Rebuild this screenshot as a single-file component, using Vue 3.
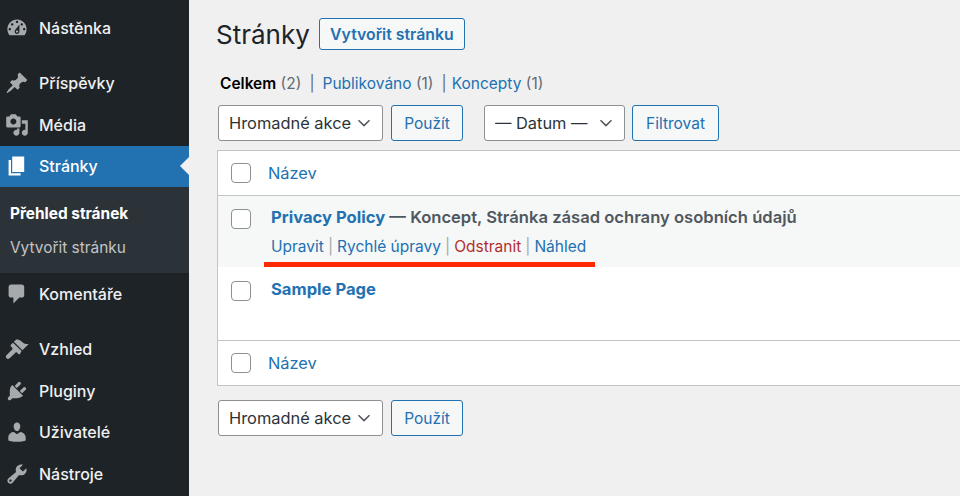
<template>
  <div class="page">
    <aside class="sidebar">
      <nav class="menu">
        <template v-for="item in menuItems" :key="item.label">
          <a class="menuItem" :class="{ current: item.current, spaced: item.spaced }">
            <svg class="menuIcon" viewBox="0 0 20 20"><path :d="item.icon" /></svg>
            <span>{{ item.label }}</span>
          </a>
          <div v-if="item.current" class="submenu">
            <a class="subItem active">Přehled stránek</a>
            <a class="subItem">Vytvořit stránku</a>
          </div>
        </template>
      </nav>
    </aside>

    <main class="content">
      <div class="titleRow">
        <h1>Stránky</h1>
        <button class="btn addNew">Vytvořit stránku</button>
      </div>

      <ul class="subsub">
        <li><b>Celkem</b> <span class="count">(2)</span></li>
        <li class="sep">|</li>
        <li><a>Publikováno</a> <span class="count">(1)</span></li>
        <li class="sep">|</li>
        <li class="last"><a>Koncepty</a> <span class="count">(1)</span></li>
      </ul>

      <div class="tablenav">
        <div class="selectBox bulk">
          <select><option>Hromadné akce</option></select>
          <svg viewBox="0 0 14 8"><path d="M1.5 1.2 7 6.6l5.5-5.4" /></svg>
        </div>
        <button class="btn apply">Použít</button>
        <div class="selectBox date">
          <select><option>— Datum —</option></select>
          <svg viewBox="0 0 14 8"><path d="M1.5 1.2 7 6.6l5.5-5.4" /></svg>
        </div>
        <button class="btn filter">Filtrovat</button>
      </div>

      <div class="table">
        <div class="row head">
          <input type="checkbox" />
          <a class="colName">Název</a>
        </div>
        <div class="row page-row hovered">
          <input type="checkbox" />
          <div class="cell">
            <div class="titleLine"><a>Privacy Policy</a> — Koncept, Stránka zásad ochrany osobních údajů</div>
            <div class="actions">
              <a>Upravit</a><i>|</i><a>Rychlé úpravy</a><i>|</i><a class="danger">Odstranit</a><i>|</i><a>Náhled</a>
            </div>
          </div>
          <div class="redLine"></div>
        </div>
        <div class="row page-row">
          <input type="checkbox" />
          <div class="cell">
            <div class="titleLine"><a>Sample Page</a></div>
          </div>
        </div>
        <div class="row foot">
          <input type="checkbox" />
          <a class="colName">Název</a>
        </div>
      </div>

      <div class="tablenav bottom">
        <div class="selectBox bulk">
          <select><option>Hromadné akce</option></select>
          <svg viewBox="0 0 14 8"><path d="M1.5 1.2 7 6.6l5.5-5.4" /></svg>
        </div>
        <button class="btn apply">Použít</button>
      </div>
    </main>
  </div>
</template>

<script setup>
const menuItems = [
  {
    label: 'Nástěnka',
    icon: 'M3.76 16h12.48c1.1-1.37 1.76-3.11 1.76-5 0-4.42-3.58-8-8-8s-8 3.58-8 8c0 1.89.66 3.63 1.76 5zM10 4c.55 0 1 .45 1 1s-.45 1-1 1-1-.45-1-1 .45-1 1-1zM6 6c.55 0 1 .45 1 1s-.45 1-1 1-1-.45-1-1 .45-1 1-1zm8 0c.55 0 1 .45 1 1s-.45 1-1 1-1-.45-1-1 .45-1 1-1zm-5.37 5.55L12 7v6c0 1.1-.9 2-2 2s-2-.9-2-2c0-.57.24-1.08.63-1.45zM4 10c.55 0 1 .45 1 1s-.45 1-1 1-1-.45-1-1 .45-1 1-1zm12 0c.55 0 1 .45 1 1s-.45 1-1 1-1-.45-1-1 .45-1 1-1zm-5 3c0-.55-.45-1-1-1s-1 .45-1 1 .45 1 1 1 1-.45 1-1z'
  },
  {
    label: 'Příspěvky',
    spaced: true,
    icon: 'M10.44 3.02l1.82-1.82 6.36 6.35-1.83 1.82c-1.05-.68-2.48-.57-3.41.36l-.75.75c-.92.93-1.04 2.35-.35 3.41l-1.83 1.82-2.41-2.41-2.8 2.79c-.42.42-3.38 2.71-3.8 2.29s1.86-3.39 2.28-3.81l2.79-2.79L4.1 9.36l1.83-1.82c1.05.69 2.48.57 3.4-.36l.75-.75c.93-.92 1.05-2.35.36-3.41z'
  },
  {
    label: 'Média',
    icon: 'M13 11V4c0-.55-.45-1-1-1h-1.67L9 1H5L3.67 3H2c-.55 0-1 .45-1 1v7c0 .55.45 1 1 1h10c.55 0 1-.45 1-1zM7 4.5c1.38 0 2.5 1.12 2.5 2.5S8.38 9.5 7 9.5 4.5 8.38 4.5 7 5.62 4.5 7 4.5zM14 6h5v10.5c0 1.38-1.12 2.5-2.5 2.5S14 17.88 14 16.5s1.12-2.5 2.5-2.5c.17 0 .34.02.5.05V9h-3V6zm-4 8.05V13h2v3.5c0 1.38-1.12 2.5-2.5 2.5S7 17.88 7 16.5 8.12 14 9.5 14c.17 0 .34.02.5.05z'
  },
  {
    label: 'Stránky',
    current: true,
    icon: 'M6 15V2h10v13H6zm-1 1h8v2H3V5h2v11z'
  },
  {
    label: 'Komentáře',
    icon: 'M5 2h9c1.1 0 2 .9 2 2v7c0 1.1-.9 2-2 2h-2l-5 5v-5H5c-1.1 0-2-.9-2-2V4c0-1.1.9-2 2-2z'
  },
  {
    label: 'Vzhled',
    spaced: true,
    icon: 'M14.48 11.06L7.41 3.99l1.5-1.5c.5-.56 2.3-.47 3.51.32 1.21.8 1.43 1.28 2.91 2.1 1.18.64 2.45 1.26 4.45.85zM13.77 11.77 6.7 4.7 4.93 6.47c-.39.39-.39 1.02 0 1.41l1.06 1.06c.39.39.39 1.03 0 1.42L1.4 14.9c-.9.9-.9 2-.1 2.8s1.9.8 2.8-.1l4.54-4.54c.39-.39 1.02-.39 1.41 0l1.07 1.06c.39.39 1.02.39 1.41 0z'
  },
  {
    label: 'Pluginy',
    icon: 'M13.11 4.36L9.87 7.6 8 5.73l3.24-3.24c.35-.34 1.05-.2 1.56.32.52.51.66 1.21.31 1.55zm-8 1.77l.91-1.12 9.01 9.01-1.19.84c-.71.71-2.63 1.16-3.82 1.16H6.14L4.9 17.26c-.59.59-1.54.59-2.12 0-.59-.58-.59-1.53 0-2.12l1.24-1.24v-3.88c0-1.13.4-3.19 1.09-3.89zm7.26 3.97l3.24-3.24c.34-.35 1.04-.21 1.55.31.52.51.66 1.21.31 1.55l-3.24 3.25z'
  },
  {
    label: 'Uživatelé',
    icon: 'M10 9.25c-2.27 0-2.73-3.44-2.73-3.44C7 4.02 7.82 2 9.97 2c2.16 0 2.98 2.02 2.71 3.81 0 0-.41 3.44-2.68 3.44zm0 2.57L12.72 10c2.39 0 4.52 2.33 4.52 4.53v2.49s-3.65 1.13-7.24 1.13c-3.65 0-7.24-1.13-7.24-1.13v-2.49c0-2.25 1.94-4.48 4.47-4.48z'
  },
  {
    label: 'Nástroje',
    icon: 'M16.68 9.77c-1.34 1.34-3.3 1.67-4.95.99l-5.41 6.52c-.99.99-2.59.99-3.58 0s-.99-2.59 0-3.57l6.52-5.42c-.68-1.65-.35-3.61.99-4.95 1.28-1.28 3.12-1.62 4.72-1.06l-2.89 2.89 2.82 2.82 2.86-2.87c.53 1.58.18 3.39-1.08 4.65zM3.81 16.21c.4.39 1.04.39 1.43 0 .4-.4.4-1.04 0-1.43-.39-.4-1.03-.4-1.43 0-.39.39-.39 1.03 0 1.43z'
  }
]
</script>

<style>
html,
body {
  margin: 0;
  background: #f0f0f1;
  overflow: hidden;
}
</style>

<style scoped>
.page {
  display: flex;
  width: 960px;
  height: 496px;
  overflow: hidden;
  font-family: Inter, "Liberation Sans", sans-serif;
  font-size: 16px;
  color: #3c434a;
  background: #f0f0f1;
}

/* sidebar */
.sidebar {
  flex: 0 0 189px;
  background: #1d2327;
  padding-top: 7px;
  box-sizing: border-box;
}
.menuItem {
  display: flex;
  align-items: center;
  gap: 10px;
  height: 41.5px;
  padding-left: 5px;
  color: #f0f0f1;
  font-weight: 500;
}
.menuItem.spaced {
  margin-top: 14px;
}
.menuItem.current {
  position: relative;
  background: #2271b1;
  color: #fff;
}
.menuItem.current::after {
  content: '';
  position: absolute;
  right: 0;
  top: 50%;
  margin-top: -9px;
  border: 9px solid transparent;
  border-right-color: #f0f0f1;
  border-left-width: 0;
}
.menuIcon {
  width: 24px;
  height: 24px;
  fill: #a7aaad;
  flex: none;
}
.current .menuIcon {
  fill: #fff;
}
.submenu {
  background: #2c3338;
  height: 86px;
  padding: 9px 0 0 10px;
  box-sizing: border-box;
}
.subItem {
  display: flex;
  align-items: center;
  height: 34px;
  color: #c3c4c7;
  font-size: 15.4px;
}
.subItem.active {
  color: #fff;
  font-weight: 700;
}

/* content */
.content {
  flex: 1;
  min-width: 0;
  padding: 18px 0 0 28px;
}
.titleRow {
  display: flex;
  align-items: flex-start;
  gap: 9px;
  margin-left: -1px;
}
h1 {
  margin: 1px 0 0;
  font-size: 26px;
  font-weight: 400;
  color: #1d2327;
  line-height: 32px;
}
.btn {
  height: 36px;
  box-sizing: border-box;
  border: 1px solid #2271b1;
  border-radius: 3px;
  background: #f6f7f7;
  color: #2271b1;
  font-family: inherit;
  font-size: 15.5px;
  padding: 0;
}
.addNew {
  width: 146px;
  height: 32px;
  font-weight: 600;
  font-size: 15.8px;
}
.subsub {
  list-style: none;
  display: flex;
  gap: 8px;
  margin: 24px 0 0 3px;
  padding: 0;
  height: 18px;
  line-height: 18px;
  font-size: 15.5px;
  white-space: nowrap;
}
.subsub b {
  color: #000;
  font-weight: 600;
}
.subsub a {
  color: #2271b1;
}
.subsub .last {
  margin-left: -3px;
}
.count,
.sep {
  color: #646970;
}
.tablenav {
  display: flex;
  margin: 12px 0 0 1px;
  height: 36px;
}
.selectBox {
  position: relative;
  height: 36px;
}
.selectBox select {
  appearance: none;
  width: 100%;
  height: 100%;
  box-sizing: border-box;
  border: 1px solid #8c8f94;
  border-radius: 3px;
  background: #fff;
  color: #2c3338;
  font-family: inherit;
  font-size: 16.4px;
  padding: 0 0 0 10px;
}
.selectBox svg {
  position: absolute;
  right: 12px;
  top: 14px;
  width: 14px;
  height: 8px;
  fill: none;
  stroke: #50575e;
  stroke-width: 1.5;
}
.bulk {
  width: 165px;
}
.date {
  width: 141px;
  margin-left: 21px;
}
.apply {
  width: 72px;
  margin-left: 8px;
}
.filter {
  width: 87px;
  margin-left: 7px;
}
.table {
  margin-top: 9px;
  width: 760px;
  background: #fff;
  border: 1px solid #c3c4c7;
  border-right: 0;
  box-sizing: border-box;
}
.row {
  position: relative;
  display: flex;
  align-items: center;
  padding-left: 13px;
}
.row input {
  appearance: none;
  flex: none;
  margin: 0;
  width: 20px;
  height: 20px;
  box-sizing: border-box;
  border: 1px solid #8c8f94;
  border-radius: 4px;
  background: #fff;
}
.head {
  height: 44px;
  border-bottom: 1px solid #c3c4c7;
}
.foot {
  height: 44px;
  border-top: 1px solid #c3c4c7;
}
.colName {
  margin-left: 17px;
  color: #2271b1;
  font-size: 16.4px;
}
.page-row {
  align-items: flex-start;
  height: 71px;
  padding-top: 11px;
  box-sizing: border-box;
}
.page-row input {
  margin-top: 2px;
}
.hovered {
  background: #f6f7f7;
}
.page-row + .page-row {
  height: 73px;
  padding-top: 12px;
}
.cell {
  margin-left: 20px;
}
.titleLine {
  font-weight: 600;
  font-size: 16.6px;
  line-height: 20px;
  white-space: nowrap;
  color: #50575e;
}
.titleLine a {
  color: #2271b1;
  font-weight: 700;
  font-size: 16.6px;
}
.actions {
  margin-top: 10px;
  font-size: 15.5px;
  line-height: 20px;
  color: #2271b1;
  white-space: nowrap;
}
.actions i {
  font-style: normal;
  color: #a7aaad;
  margin: 0 4px;
}
.danger {
  color: #b32d2e;
}
.redLine {
  position: absolute;
  left: 46px;
  top: 66px;
  width: 331px;
  height: 5px;
  background: #ff2a00;
}
.bottom {
  margin-top: 14px;
}
</style>
